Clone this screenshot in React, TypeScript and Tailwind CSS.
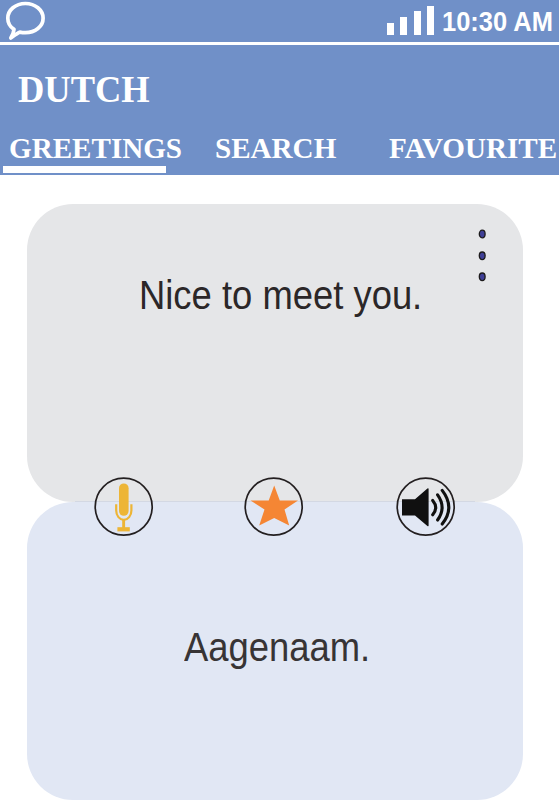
import type { ReactNode } from 'react';

const tabs = [
  { name: 'GREETINGS', place: 'ml-[8.5px]' },
  { name: 'SEARCH', place: 'ml-[28px]' },
  { name: 'FAVOURITE', place: 'ml-[49px]' },
]

const bars = ['h-[12px]', 'h-[18px]', 'h-[24px]', 'h-[29px]']

function StatusBar() {
  return (
    <div className="flex h-[45px] justify-between border-b-[3px] border-white">
      <svg className="h-[42px] w-[50px]" viewBox="0 0 50 42" fill="none" stroke="white" strokeWidth="3.7" strokeLinejoin="round">
        <path d="M14 29.4C9.8 26.6 7.8 22.6 7.8 18.2C7.8 10 15.6 3.5 25.4 3.5C35.2 3.5 43.1 10 43.1 18.2C43.1 26.4 35.2 32.7 25.4 32.7C23.4 32.7 21.6 32.5 19.8 32.1C17.4 33.2 14.4 35.5 10.8 38C12.6 35.2 13.6 32.5 14 29.4Z" />
      </svg>
      <div className="flex">
        <div className="mr-2 flex h-[35px] items-end gap-[6.3px]">
          {bars.map((height) => (
            <span key={height} className={`w-[7px] bg-white ${height}`} />
          ))}
        </div>
        <span className="mt-2 w-[117px] origin-left scale-x-[0.91] whitespace-nowrap font-['Liberation_Sans',sans-serif] text-[28px] font-bold leading-none">
          10:30 AM
        </span>
      </div>
    </div>
  )
}

function RoundButton({ label, children }: { label: string; children: ReactNode }) {
  return (
    <button aria-label={label} className="size-[60px]">
      <svg viewBox="0 0 60 60" className="size-full">
        <circle cx="29.7" cy="29.7" r="28.5" fill="none" stroke="#231f20" strokeWidth="1.7" />
        {children}
      </svg>
    </button>
  )
}

export default function App() {
  return (
    <div className="h-[800px] w-[559px] overflow-hidden bg-white">
      <header className="h-[175px] bg-[#7090c8] text-white">
        <StatusBar />
        <h1 className="ml-[17.5px] mt-[25px] origin-left scale-x-[0.96] font-['Liberation_Serif',serif] text-[38px] font-bold leading-none">DUTCH</h1>
        <nav className="mt-[25px] flex font-['Liberation_Serif',serif] text-[30px] font-bold leading-none">
          {tabs.map(({ name, place }) => (
            <a key={name} className={`origin-left scale-x-[0.97] whitespace-nowrap ${place}`}>{name}</a>
          ))}
        </nav>
        <div className="ml-[3px] mt-[3px] h-[7px] w-[163px] bg-white" />
      </header>
      <main className="relative ml-[27px] mt-[29px] w-[496px] font-['Liberation_Sans',sans-serif] text-[40px] leading-none">
        <section className="h-[298px] rounded-[46px] bg-[#e5e6e8] pt-[71px] text-[#2b2728]">
          <p className="ml-[111.5px] origin-left scale-x-[0.91] whitespace-nowrap">Nice to meet you.</p>
        </section>
        <section className="h-[298px] rounded-[46px] bg-[#e1e7f4] pt-[125px] text-[#373435]">
          <p className="ml-[156.5px] origin-left scale-x-[0.91] whitespace-nowrap">Aagenaam.</p>
        </section>
        <div className="absolute left-[48px] top-[297px] h-px w-[400px] bg-[#d3d8e3]" />
        <svg className="absolute left-[450px] top-[20px] h-[62px] w-[11px]" viewBox="0 0 11 62" fill="#3f3f96" stroke="#1c1a1b" strokeWidth="1.3">
          <ellipse cx="5.2" cy="10" rx="2.9" ry="3.8" />
          <ellipse cx="5.2" cy="31.8" rx="2.9" ry="3.8" />
          <ellipse cx="5.2" cy="52.8" rx="2.9" ry="3.8" />
        </svg>
        <div className="absolute left-[67px] top-[272.5px] flex">
          <RoundButton label="Record">
            <g fill="#edb536">
              <rect x="25" y="6.4" width="9.6" height="32.4" rx="4.8" />
              <rect x="28.2" y="43" width="2.9" height="9" />
              <rect x="23.4" y="50.2" width="12.4" height="4.2" />
            </g>
            <path d="M22.2 27.2V33.5A7.6 9.4 0 0 0 37.4 33.5V27.2" fill="none" stroke="#edb536" strokeWidth="2.2" />
          </RoundButton>
          <span className="w-[89.5px]" />
          <RoundButton label="Favourite">
            <path d="M30.2 8.5L35.8 23.5H54L40.5 32.5L45.2 48.5L30.2 41L15.2 48.5L20.5 32.5L6.5 23.5H24.7Z" fill="#f58634" />
          </RoundButton>
          <span className="w-[92px]" />
          <RoundButton label="Listen">
            <path d="M6 22.2H19L31.4 11.4Q32.6 10.8 32.6 12V48.6Q32.6 49.8 31.4 49L19 38.6H6Z" fill="#101010" />
            <g fill="none" stroke="#101010" strokeWidth="3.1" strokeLinecap="round">
              <path d="M36.7 23.4Q42.7 30.5 36.7 37.8" />
              <path d="M41.6 17.8Q50.6 30.5 41.6 43" />
              <path d="M46.2 13.4Q59.4 30.5 46.2 47" />
            </g>
          </RoundButton>
        </div>
      </main>
    </div>
  )
}
